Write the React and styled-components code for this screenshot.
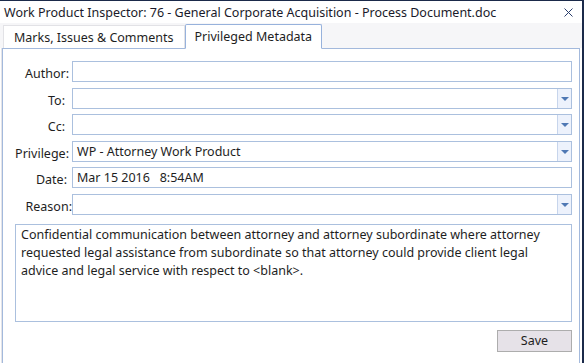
import React from "react";
import styled, { createGlobalStyle } from "styled-components";

const GlobalStyle = createGlobalStyle`
  html, body {
    margin: 0;
    padding: 0;
    background: #ffffff;
  }
  body {
    font-family: "Noto Sans", "Open Sans", sans-serif;
    font-size: 12px;
    color: #1e1e1e;
  }
`;

const Window = styled.div`
  width: 582px;
  height: 362px;
  border-top: 1px solid #1b2a4a;
  border-right: 2px solid #1b2a4a;
  display: flex;
  flex-direction: column;
  background: #ffffff;
  overflow: hidden;
`;

const TitleBar = styled.div`
  height: 22px;
  flex: none;
  display: flex;
  align-items: center;
  justify-content: space-between;
  padding: 0 8px 0 4px;
  font-size: 12.5px;
  color: #1a1a2a;
  white-space: nowrap;
`;

const CloseButton = styled.button`
  border: 0;
  background: transparent;
  padding: 0;
  width: 12px;
  height: 12px;
  display: flex;
  align-items: center;
  justify-content: center;
  margin-top: 1px;
`;

const TabStrip = styled.div`
  height: 25px;
  flex: none;
  background: #f6f6f8;
  display: flex;
  align-items: flex-end;
  padding-left: 3px;
`;

const Tab = styled.div`
  height: ${(p) => (p.$active ? "25px" : "23px")};
  box-sizing: border-box;
  padding: 0 ${(p) => (p.$active ? "9px" : "10px")};
  display: flex;
  align-items: center;
  font-size: 12.5px;
  color: #1e1e1e;
  background: #ffffff;
  border: 1px solid ${(p) => (p.$active ? "#97b2dc" : "#e2e2e6")};
  border-bottom: ${(p) => (p.$active ? "1px solid #ffffff" : "none")};
  border-radius: ${(p) => (p.$active ? "2px 2px 0 0" : "0")};
  margin-bottom: ${(p) => (p.$active ? "-1px" : "0")};
  position: relative;
  z-index: ${(p) => (p.$active ? 1 : 0)};
`;

const Panel = styled.div`
  flex: 1;
  margin-left: 2px;
  margin-right: 2px;
  border: 1px solid #a3b9dc;
  border-bottom: none;
  box-shadow: -1px 0 0 #e4e4e8;
  padding: 12px 7px 0 0;
  display: flex;
  flex-direction: column;
`;

const Form = styled.div`
  display: grid;
  grid-template-columns: 69px 1fr;
  grid-auto-rows: 21px;
  row-gap: 5.6px;
`;

const Label = styled.div`
  height: 21px;
  box-sizing: border-box;
  text-align: right;
  padding-right: ${(p) => p.$pad}px;
  padding-top: 5px;
  white-space: nowrap;
  font-size: 12.5px;
  line-height: 16px;
`;

const Field = styled.div`
  height: 21px;
  box-sizing: border-box;
  border: 1px solid #abc0de;
  display: flex;
  align-items: center;
  background: #ffffff;
`;

const FieldText = styled.span`
  flex: 1;
  padding-left: 4px;
  font-size: 12.5px;
  white-space: pre;
`;

const DropButton = styled.div`
  width: 13px;
  align-self: stretch;
  background: #edf2fc;
  border-left: 1px solid #c7d5ec;
  display: flex;
  align-items: center;
  justify-content: center;
`;

const Arrow = styled.span`
  width: 0;
  height: 0;
  border-left: 4px solid transparent;
  border-right: 4px solid transparent;
  border-top: 4px solid #4f78b4;
  margin-top: 1px;
`;

const ReasonText = styled.div`
  margin: 9px 0 0 12px;
  height: 98px;
  flex: none;
  box-sizing: border-box;
  border: 1px solid #abc0de;
  padding: 1px 5px;
  font-size: 12.5px;
  line-height: 18px;
  color: #1e1e1e;
`;

const Footer = styled.div`
  display: flex;
  justify-content: flex-end;
  margin-top: 8px;
`;

const SaveButton = styled.button`
  width: 75px;
  height: 22px;
  background: #e6e2e8;
  border: 1px solid #adadad;
  font-family: "Noto Sans", "Open Sans", sans-serif;
  font-size: 12.5px;
  color: #1e1e1e;
  padding: 0;
`;

const rows = [
  { label: "Author:", pad: 3, value: "", drop: false },
  { label: "To:", pad: 7, value: "", drop: true },
  { label: "Cc:", pad: 7, value: "", drop: true },
  { label: "Privilege:", pad: 3, value: "WP - Attorney Work Product", drop: true },
  { label: "Date:", pad: 5, value: "Mar 15 2016   8:54AM", drop: false },
  { label: "Reason:", pad: 0, value: "", drop: true },
];

export default function App() {
  return (
    <>
      <GlobalStyle />
      <Window>
        <TitleBar>
          <span>
            Work Product Inspector: 76 - General Corporate Acquisition - Process Document.doc
          </span>
          <CloseButton>
            <svg width="9" height="9" viewBox="0 0 9 9">
              <path d="M0.5 0.5 L8.5 8.5 M8.5 0.5 L0.5 8.5" stroke="#2a3d6b" strokeWidth="1" />
            </svg>
          </CloseButton>
        </TitleBar>
        <TabStrip>
          <Tab>Marks, Issues &amp; Comments</Tab>
          <Tab $active>Privileged Metadata</Tab>
        </TabStrip>
        <Panel>
          <Form>
            {rows.map((r) => (
              <React.Fragment key={r.label}>
                <Label $pad={r.pad}>{r.label}</Label>
                <Field>
                  <FieldText>{r.value}</FieldText>
                  {r.drop && (
                    <DropButton>
                      <Arrow />
                    </DropButton>
                  )}
                </Field>
              </React.Fragment>
            ))}
          </Form>
          <ReasonText>
            Confidential communication between attorney and attorney subordinate where attorney
            requested legal assistance from subordinate so that attorney could provide client legal
            advice and legal service with respect to &lt;blank&gt;.
          </ReasonText>
          <Footer>
            <SaveButton>Save</SaveButton>
          </Footer>
        </Panel>
      </Window>
    </>
  );
}
